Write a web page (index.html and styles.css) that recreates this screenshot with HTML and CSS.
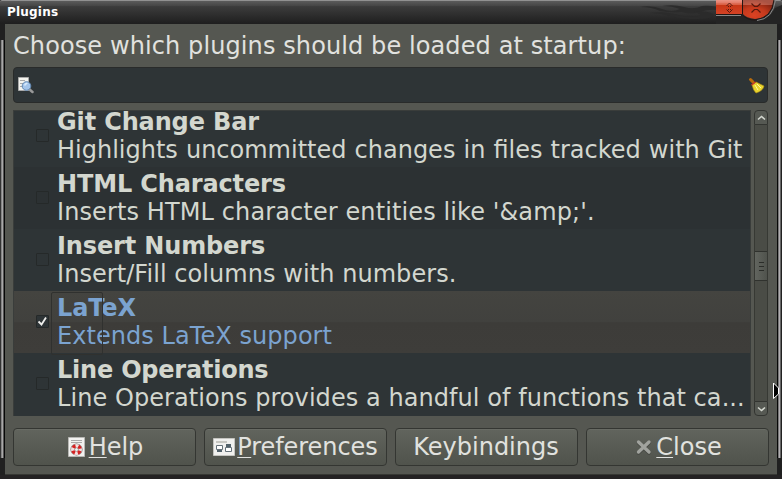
FILE: index.html
```html
<!DOCTYPE html>
<html lang="en">
<head>
<meta charset="utf-8">
<title>Plugins</title>
<link rel="stylesheet" href="styles.css">
</head>
<body>
<div class="window">
  <header class="titlebar">
    <span class="title">Plugins</span>
    <svg class="flames" width="80" height="24" viewBox="0 0 80 24">
      <path d="M0 7Q12 5 22 9Q32 13 40 9Q32 6 22 6Q34 4 44 7Q54 10 62 6Q68 5 78 7V10Q68 9 60 12Q52 15 42 12Q30 13 20 11Q12 7 0 7Z"/>
      <path d="M10 13Q24 11 34 14Q48 18 58 16Q64 15 54 12Q70 10 74 15Q72 19 58 19Q44 20 30 16Q20 13 10 13Z"/>
    </svg>
    <svg class="controls" width="66" height="24" viewBox="0 0 66 24">
      <defs>
        <linearGradient id="red" x2="0" y2="1"><stop stop-color="#e08476"/><stop offset=".24" stop-color="#d4573f"/><stop offset=".26" stop-color="#c53514"/><stop offset="1" stop-color="#d44225"/></linearGradient>
        <radialGradient id="glow" cx=".35" cy=".8" r=".8"><stop stop-color="#db4223"/><stop offset=".5" stop-color="#c53a1d"/><stop offset="1" stop-color="#7c2010"/></radialGradient>
      </defs>
      <path fill="#242424" d="M0 15H26Q32 21 41 21Q54 20 59 8L66 5V24H0Z"/>
      <path fill="url(#red)" d="M0 0H27V14H0Z"/>
      <path fill="url(#glow)" d="M27 0H58Q56 18 39 19Q30 18 27 14Z"/>
      <path fill="#ffb5a5" opacity=".35" d="M0 0H58L57 5H0Z"/>
      <path fill="none" stroke="#211513" d="M0 14.500H26Q31 20 39 20Q56 18 58 0M26.500 0V14"/>
      <path fill="none" stroke="#888" d="M0 15.500H25M59.500 0Q57 19 41 20.500"/>
      <path fill="none" stroke="#54190f" d="M10.500 6L13.500 3L16.500 6M10.500 9.500L13.500 12.500L16.500 9.500M12.500 6V7M14.500 6V7M12.500 9V10M14.500 9V10"/>
      <path fill="none" stroke="#54190f" stroke-width="1.200" d="M35.500 3.500L38.500 6.500H41.500L44.500 3.500M35.500 12.500L38.500 9.500H41.500L44.500 12.500"/>
    </svg>
  </header>
  <div class="frame">
    <div class="edge left"></div>
    <main class="dialog">
      <p class="prompt">Choose which plugins should be loaded at startup:</p>
      <div class="search">
        <svg width="17" height="17" viewBox="0 0 17 17">
          <path fill="#f4f4ef" stroke="#aaa" d="M1.500.5H11.500V13.500H1.500Z"/>
          <path stroke="#aaa" d="M3 3.500H8M3 6.500H7M3 9.500H6"/>
          <path stroke="#999" stroke-width="2.500" stroke-linecap="round" d="M12 12L15.500 15"/>
          <circle cx="9.500" cy="9" r="4.300" fill="#a4c5ea" stroke="#6289b4"/>
          <path fill="#d9eafa" d="M7 8Q8 5 11 6L8 9Z"/>
        </svg>
        <svg width="17" height="17" viewBox="0 0 17 17">
          <path stroke="#b86b0c" stroke-width="3" stroke-linecap="round" d="M2.500 2.500L5 5"/>
          <path fill="#e9d52f" stroke="#b09113" stroke-width=".6" d="M4 8L8 5L16 9Q15 14 8 16Q5 13 4 8Z"/>
          <path stroke="#cf3827" stroke-width="1.500" d="M3.500 8L7.500 5"/>
          <path stroke="#fffa9a" d="M7 8L10 13M9 7L13 11"/>
        </svg>
      </div>
      <div class="browser">
        <ul class="list">
          <li class="row"><i class="check"></i><div class="text"><b>Git Change Bar</b><span class="joined">Highlights uncommitted changes in files tracked with Git</span></div></li>
          <li class="row alt"><i class="check"></i><div class="text"><b>HTML Characters</b><span class="wide">Inserts HTML character entities like '&amp;amp;'.</span></div></li>
          <li class="row"><i class="check"></i><div class="text"><b>Insert Numbers</b><span>Insert/Fill columns with numbers.</span></div></li>
          <li class="row selected"><i class="check on"><svg width="11" height="11" viewBox="0 0 11 11"><path fill="none" stroke="#eeeeec" stroke-width="1.800" d="M1.500 5.500L4.500 8.500L9 1.500"/></svg></i><div class="text"><b>LaTeX</b><span>Extends LaTeX support</span></div></li>
          <li class="row"><i class="check"></i><div class="text"><b class="tight">Line Operations</b><span>Line Operations provides a handful of functions that ca...</span></div></li>
        </ul>
        <div class="scrollbar">
          <div class="arrow up"><svg width="9" height="6" viewBox="0 0 9 6"><path d="M1 4.500L4.500 1.500L8 4.500"/></svg></div>
          <div class="track"><div class="thumb"><i></i><i></i><i></i></div></div>
          <div class="arrow down"><svg width="9" height="6" viewBox="0 0 9 6"><path d="M1 1.500L4.500 4.500L8 1.500"/></svg></div>
        </div>
      </div>
      <div class="buttons">
        <div class="button help">
          <svg width="19" height="22" viewBox="0 0 19 22">
            <path fill="#f2f2f0" stroke="#b8b8b5" d="M1.500 1.500H17.500V20.500H1.500Z"/>
            <path stroke="#aaa" d="M4 4.500H15M4 6.500H15"/>
            <circle cx="9.500" cy="13.500" r="3.800" fill="none" stroke="#777" stroke-width="4.600"/>
            <circle cx="9.500" cy="13.500" r="3.800" fill="none" stroke="#f4dede" stroke-width="3.400"/>
            <circle cx="9.500" cy="13.500" r="3.800" fill="none" stroke="#d32222" stroke-width="3.400" stroke-dasharray="2.980 2.990" stroke-dashoffset="-1.490"/>
          </svg><span><u>H</u>elp</span>
        </div>
        <div class="button preferences">
          <svg width="22" height="18" viewBox="0 0 22 18">
            <path fill="#f0f0ee" stroke="#c4c4c0" d="M.5.5H21.500V17.500H.5Z"/>
            <path fill="#c7c7c2" d="M3 3H14V5H3Z"/>
            <path fill="#52616a" d="M13 6H18V9H13ZM4 12H9V14H4Z"/>
            <path fill="#fff" stroke="#66727a" d="M3.500 7.500H9.500V11.500H3.500ZM12.500 9.500H18.500V13.500H12.500Z"/>
          </svg><span><u>P</u>references</span>
        </div>
        <div class="button keys"><span>Keybindings</span></div>
        <div class="button close">
          <svg width="18" height="18" viewBox="0 0 18 18"><path fill="none" stroke="#454742" stroke-width="3.500" stroke-linecap="round" d="M3.500 5L14 15M14 5L3.500 15"/><path fill="none" stroke="#a1a39e" stroke-width="3.300" stroke-linecap="round" d="M3.500 4L14 14M14 4L3.500 14"/></svg><span><u>C</u>lose</span>
        </div>
      </div>
    </main>
    <div class="edge right"></div>
  </div>
  <svg class="pointer" width="6" height="18" viewBox="0 0 6 18"><path fill="#000" stroke="#fff" d="M.5 1L5.500 6V12L.5 16.500Z"/></svg>
</div>
</body>
</html>
```
FILE: styles.css
```css
* { box-sizing: border-box; }
body {
  margin: 0;
  overflow: hidden;
  font: 24px/28px "DejaVu Sans", sans-serif;
  color: #d3d7cf;
}
.window {
  position: relative;
  width: 782px;
  height: 479px;
  display: flex;
  flex-direction: column;
  background: #242223;
}
.titlebar {
  position: relative;
  height: 24px;
  flex: none;
  display: flex;
  padding-left: 7px;
  border-top: 1px solid #919191;
  border-radius: 2px 2px 0 0;
  background: linear-gradient(#5b5b5b, #454545 22%, #3c3c3c 24%, #1e1e1e);
}
.title { color: #fff; font-size: 12px; line-height: 22px; font-weight: bold; letter-spacing: .2px; }
.flames { position: absolute; right: 62px; top: -1px; fill: #2b2b2b; }
.controls { position: absolute; right: 0; top: -1px; }
.frame { display: flex; height: 451px; }
.edge {
  width: 5px;
  flex: none;
  background: linear-gradient(90deg, #333 1px, #858585 1px 2px, #aaa8a9 2px 3px, #555 3px 4px, #080808 4px) 0 16px / 5px 418px no-repeat #202020;
}
.edge.right { background-image: linear-gradient(90deg, #080808 1px, #777 1px 2px, #b3afb3 2px 3px, #666 3px 4px, #222 4px); }
.dialog {
  flex: 1;
  min-width: 0;
  padding: 8px 9px 8px 8px;
  background: #555751;
  border-bottom: 1px solid #373834;
}
.prompt { margin: 0 0 7px; color: #e1e2df; white-space: nowrap; letter-spacing: .1px; }
.search {
  height: 36px;
  display: flex;
  justify-content: space-between;
  align-items: center;
  padding: 0 2px 0 3px;
  border: 1px solid #292b2a;
  border-radius: 4px;
  background: #2e3436;
}
.browser { display: flex; gap: 3px; height: 306px; margin-top: 7px; }
.list {
  width: 738px;
  flex: none;
  margin: 0;
  padding: 0;
  list-style: none;
  background: #2e3436;
  border: 1px solid #3a3d3b;
  border-bottom: 0;
}
.row { display: flex; height: 62px; padding-left: 22px; }
.row:first-child { height: 56px; }
.row:last-child { height: 63px; }
.row:first-child .check { margin-top: 18px; }
.row:first-child .text { height: 56px; padding-top: 0; }
.row:first-child b { line-height: 22px; margin-bottom: 3px; }
.row.alt { background: #2c3133; }
.row.selected { color: #7ba3d0; background: linear-gradient(#444440, #41413e 50%, #3d3c39 51%, #3e3d3a); }
.check {
  width: 13px;
  height: 13px;
  flex: none;
  margin: 24px 3px 0 0;
  border: 1px solid #252929;
  border-radius: 1px;
}
.check.on { display: flex; background: #2e3436; }
.text {
  position: relative;
  height: 62px;
  padding: 3px 0 0 5px;
  white-space: nowrap;
}
.text b, .text span { display: block; }
.text b { letter-spacing: -.14px; }
.text b.tight { letter-spacing: -.22px; }
.text span { letter-spacing: .06px; }
.text span.wide { letter-spacing: .11px; }
.text span.joined { letter-spacing: normal; word-spacing: .45px; }
.selected .text::after {
  content: "";
  position: absolute;
  left: -1px;
  top: 1px;
  width: 50px;
  height: 61px;
  border: 1px solid #30312f;
  border-radius: 2px;
}
.scrollbar { width: 15px; display: flex; flex-direction: column; }
.arrow {
  height: 15px;
  display: flex;
  align-items: center;
  justify-content: center;
  border: 1px solid #333531;
  background: #565953;
}
.arrow svg { fill: none; stroke: #d3d7cf; stroke-width: 1.6; }
.up { border-radius: 4px 4px 0 0; }
.down { border-radius: 0 0 4px 4px; }
.track { flex: 1; padding-top: 126px; border: solid #373934; border-width: 0 1px; background: #4a4c46; }
.thumb {
  display: flex;
  flex-direction: column;
  align-items: center;
  justify-content: center;
  gap: 3px;
  height: 30px;
  border: solid #30322e;
  border-width: 1px 0;
  background: linear-gradient(90deg, #62655f, #50534d);
}
.thumb i { width: 5px; height: 1px; background: #2b2d29; }
.buttons { display: grid; grid-template-columns: repeat(4, 183px); gap: 8px; margin-top: 12px; }
.button {
  height: 38px;
  display: flex;
  align-items: center;
  justify-content: center;
  gap: 3px;
  color: #e1e2df;
  border: 1px solid #343632;
  border-radius: 4px;
  background: linear-gradient(#61645d, #50534c);
  box-shadow: inset 0 1px #686b64;
}
.help { padding-left: 1px; }
.close { padding-left: 2px; }
.preferences { gap: 2px; letter-spacing: -.06px; }
.keys { padding-right: 1px; }
.button u { text-decoration-thickness: 1px; text-underline-offset: 2px; text-decoration-skip-ink: none; }
.pointer { position: absolute; left: 773px; top: 382px; }
```
